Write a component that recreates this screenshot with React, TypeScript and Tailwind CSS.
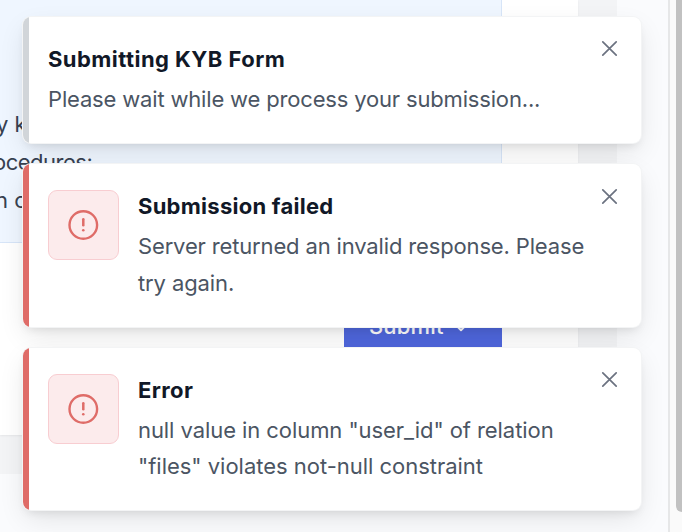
import { ChevronDown } from "lucide-react";

type Line = { text: string; className: string };

type ToastProps = {
  title: string;
  lines: Line[];
  error?: boolean;
  className: string;
  titleClass: string;
  closeClass: string;
};

function AlertIcon() {
  return (
    <div className="flex h-[70px] w-[71px] shrink-0 items-center justify-center rounded-[9px] border border-[#f8cdd1] bg-[#fcebec]">
      <svg width="32" height="32" viewBox="0 0 32 32" fill="none" stroke="#df6c68" strokeLinecap="round">
        <circle cx="15.3" cy="16" r="13.8" strokeWidth="2.4" />
        <path d="M15.3 10.2v6" strokeWidth="2.5" />
        <path d="M15.3 21.2v.1" strokeWidth="2.6" />
      </svg>
    </div>
  );
}

function Toast({ title, lines, error, className, titleClass, closeClass }: ToastProps) {
  return (
    <section
      className={`relative flex rounded-[8px] bg-white shadow-[0_0_0_1px_#f3f4f5,0_10px_28px_-3px_rgba(0,0,0,0.11),0_5px_10px_-3px_rgba(0,0,0,0.10)] ${className}`}
    >
      <div className="flex w-full overflow-hidden rounded-[8px]">
        <div className={`w-[6px] shrink-0 ${error ? "bg-[#df6c68]" : "bg-[#d1d5d9]"}`} />
        <div className="flex grow gap-[19px] pt-[26px] pl-[19px]">
          {error && <AlertIcon />}
          <div className="-mt-px grow whitespace-nowrap">
            <h2 className={`text-[22px] leading-[34px] font-bold text-[#111827] ${titleClass}`}>{title}</h2>
            <div className="mt-[5px]">
              {lines.map((line) => (
                <p key={line.text} className={`text-[22px] text-[#4b5563] ${line.className}`}>
                  {line.text}
                </p>
              ))}
            </div>
          </div>
        </div>
      </div>
      <button
        aria-label="Close"
        className={`absolute right-[23px] flex size-[17px] items-center justify-center text-[#6b7280] ${closeClass}`}
      >
        <svg width="17" height="17" viewBox="0 0 17 17" fill="none" stroke="currentColor" strokeWidth="1.7" strokeLinecap="round">
          <path d="M1.8 1.8l13.4 13.4M15.2 1.8L1.8 15.2" />
        </svg>
      </button>
    </section>
  );
}

export default function App() {
  return (
    <div className="relative flex h-[532px] w-[682px] overflow-hidden bg-[#fafbfd] font-['Inter','Liberation_Sans',sans-serif]">
      <div className="flex w-[617px] shrink-0 flex-col">
        <div className="flex h-[474px] bg-[#f3f4f6]">
          <main className="h-[435px] w-[578px] bg-white shadow-[0_1px_2px_rgba(0,0,0,0.06)]">
            <div className="h-[243px] w-[502px] border-r border-b border-[#d7e5f8] bg-[#eff6ff] pt-[105px] text-[22px] leading-[38px] whitespace-nowrap text-[#374151]">
              <p className="-ml-[4px]">y k</p>
              <p className="-ml-[7px] tracking-[-0.5px]">ocedures:</p>
              <p className="-ml-[5px]">n c</p>
            </div>
            <div className="mt-[50px] ml-[344px] flex h-[66px] w-[158px] items-center gap-[8px] bg-[#4f67dd] pl-[25px] text-[22px] font-medium tracking-[0.15px] text-white">
              Submit
              <ChevronDown size={18} strokeWidth={2.5} className="mt-[3px]" />
            </div>
          </main>
        </div>
      </div>
      <div className="grow" />
      <div className="w-[2px] bg-[#e6e7e8]" />
      <div className="w-[12px] bg-[#fafafa] pl-[6px]">
        <div className="h-[512px] w-[12px] rounded-b-[6px] bg-[#c1c1c1]" />
      </div>

      <div className="absolute top-[17px] left-[23px] flex w-[618px] flex-col gap-[21px]">
        <Toast
          title="Submitting KYB Form"
          lines={[{ text: "Please wait while we process your submission...", className: "leading-[37px] tracking-[-0.17px]" }]}
          className="h-[126px]"
          titleClass="tracking-[0.45px]"
          closeClass="top-[23px]"
        />
        <Toast
          error
          title="Submission failed"
          lines={[
            { text: "Server returned an invalid response. Please", className: "leading-[37px] tracking-[-0.15px]" },
            { text: "try again.", className: "leading-[37px] tracking-[-0.1px]" },
          ]}
          className="h-[163px]"
          titleClass="tracking-[0.26px]"
          closeClass="top-[24px]"
        />
        <Toast
          error
          title="Error"
          lines={[
            { text: 'null value in column "user_id" of relation', className: "leading-[37px] tracking-[-0.07px]" },
            { text: '"files" violates not-null constraint', className: "leading-[35px] tracking-[-0.02px]" },
          ]}
          className="h-[162px]"
          titleClass="tracking-[0.4px]"
          closeClass="top-[23px]"
        />
      </div>
    </div>
  );
}
